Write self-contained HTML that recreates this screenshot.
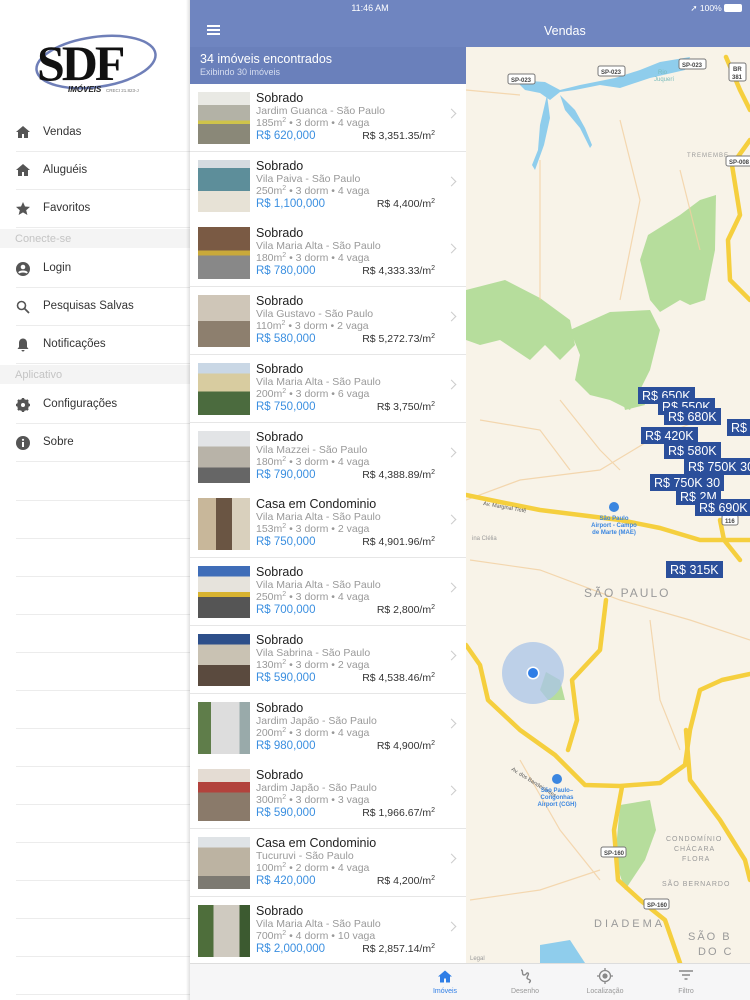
<!DOCTYPE html>
<html><head><meta charset="utf-8">
<style>
*{margin:0;padding:0;box-sizing:border-box}
body{width:750px;height:1000px;position:relative;overflow:hidden;background:#fff;font-family:"Liberation Sans",sans-serif;color:#222}
.abs{position:absolute}
.side{left:0;top:0;width:190px;height:1000px;background:#fff}
.mi{position:absolute;left:0;width:190px;height:38px;font-size:11.5px;color:#333}
.mi span{position:absolute;left:43px;top:12px}
.mi svg{position:absolute;left:16px;top:12px}
.mi:after{content:"";position:absolute;left:16px;right:0;bottom:0;border-bottom:1px solid #ececec}
.sec{position:absolute;left:0;width:190px;height:19px;background:#f4f4f4;color:#c4c4c4;font-size:11px;padding:4px 0 0 15px}
.line{position:absolute;left:16px;width:174px;border-top:1px solid #ececec}
.nav{left:190px;top:0;width:560px;height:47px;background:#6f85c0}
.lh{left:190px;top:47px;width:276px;height:37px;background:#6a80bb}
.row{position:absolute;left:190px;width:276px;height:68px;background:#fff;border-bottom:1px solid #e6e6e6}
.row .im{position:absolute;left:8px;top:8px;width:52px;height:52px}
.row .t{position:absolute;left:66px;top:7px;font-size:12.5px;color:#222}
.row .l{position:absolute;left:66px;top:21px;font-size:10.5px;color:#999}
.row .s{position:absolute;left:66px;top:33px;font-size:10.5px;color:#999}
.row .p{position:absolute;left:66px;top:46px;font-size:11.5px;color:#3b8fe0}
.row .m{position:absolute;right:31px;top:46px;font-size:10.5px;color:#333}
.row .c{position:absolute;right:11px;top:26px;width:7px;height:7px;border-right:1.3px solid #ccc;border-top:1.3px solid #ccc;transform:rotate(45deg)}
sup{font-size:7px;vertical-align:4px}
.tab{left:190px;top:963px;width:560px;height:37px;background:#f6f6f7;border-top:1px solid #ddd}
.tl{position:absolute;top:24px;font-size:7px;color:#999;width:80px;text-align:center}
.mk{position:absolute;background:#2b4f9b;color:#fff;font-size:12.5px;padding:1px 4px;height:17px;line-height:16px;white-space:nowrap}
</style></head><body>

<div class="abs side">
  <svg class="abs" style="left:30px;top:28px" width="130" height="75" viewBox="0 0 130 75">
    <ellipse cx="66" cy="34" rx="60" ry="25" fill="none" stroke="#6f7fb8" stroke-width="2.5" transform="rotate(-8 66 34)"/>
    <text x="7" y="52" font-family="Liberation Serif,serif" font-size="50" font-weight="bold" fill="#111" letter-spacing="-3">SDF</text>
    <text x="38" y="64" font-size="8" font-weight="bold" font-style="italic" fill="#222">IMÓVEIS</text>
    <text x="76" y="64" font-size="4.5" fill="#777">CRECI 21.823-J</text>
  </svg>
  <div class="mi" style="top:114px"><svg width="14" height="12" viewBox="0 0 14 12"><path d="M7 0L0 6h2v6h4V8h2v4h4V6h2z" fill="#555"/></svg><span>Vendas</span></div>
  <div class="mi" style="top:152px"><svg width="14" height="12" viewBox="0 0 14 12"><path d="M7 0L0 6h2v6h4V8h2v4h4V6h2z" fill="#555"/></svg><span>Aluguéis</span></div>
  <div class="mi" style="top:190px"><svg width="14" height="13" viewBox="0 0 14 13"><path d="M7 0l2 4.5 5 .4-3.8 3.3 1.2 4.8L7 10.4 2.6 13l1.2-4.8L0 4.9l5-.4z" fill="#555"/></svg><span>Favoritos</span></div>
  <div class="sec" style="top:229px">Conecte-se</div>
  <div class="mi" style="top:250px"><svg width="14" height="14" viewBox="0 0 14 14"><circle cx="7" cy="7" r="7" fill="#555"/><circle cx="7" cy="5" r="2.3" fill="#fff"/><path d="M3 11c1-2 7-2 8 0" stroke="#fff" stroke-width="2" fill="none"/></svg><span>Login</span></div>
  <div class="mi" style="top:288px"><svg width="14" height="14" viewBox="0 0 14 14"><circle cx="5.5" cy="5.5" r="4" fill="none" stroke="#555" stroke-width="1.6"/><path d="M8.5 8.5L13 13" stroke="#555" stroke-width="1.8"/></svg><span>Pesquisas Salvas</span></div>
  <div class="mi" style="top:326px"><svg width="14" height="14" viewBox="0 0 14 14"><path d="M7 0.5c-2.5 0-4 2-4 4.5v4L1.5 11h11L11 9V5c0-2.5-1.5-4.5-4-4.5zM5.5 12h3a1.5 1.5 0 0 1-3 0z" fill="#555"/></svg><span>Notificações</span></div>
  <div class="sec" style="top:365px">Aplicativo</div>
  <div class="mi" style="top:386px"><svg width="14" height="14" viewBox="0 0 14 14"><circle cx="7" cy="7" r="4.5" fill="none" stroke="#555" stroke-width="3"/><path d="M7 0v14M0 7h14M2 2l10 10M12 2L2 12" stroke="#555" stroke-width="2.4"/><circle cx="7" cy="7" r="2" fill="#fff"/></svg><span>Configurações</span></div>
  <div class="mi" style="top:424px"><svg width="14" height="14" viewBox="0 0 14 14"><circle cx="7" cy="7" r="7" fill="#555"/><rect x="6" y="6" width="2" height="5" fill="#fff"/><circle cx="7" cy="3.8" r="1.1" fill="#fff"/></svg><span>Sobre</span></div>
  <div class="line" style="top:500px"></div><div class="line" style="top:538px"></div><div class="line" style="top:576px"></div><div class="line" style="top:614px"></div><div class="line" style="top:652px"></div><div class="line" style="top:690px"></div><div class="line" style="top:728px"></div><div class="line" style="top:766px"></div><div class="line" style="top:804px"></div><div class="line" style="top:842px"></div><div class="line" style="top:880px"></div><div class="line" style="top:918px"></div><div class="line" style="top:956px"></div><div class="line" style="top:994px"></div>
</div>
<div class="abs" style="left:186px;top:0;width:4px;height:1000px;background:linear-gradient(90deg,rgba(0,0,0,0),rgba(0,0,0,.12))"></div>

<!-- map -->
<svg class="abs" style="left:466px;top:47px" width="284" height="916" viewBox="466 47 284 916">
  <rect x="466" y="47" width="284" height="916" fill="#f8f3e8"/>
  <g fill="#b6dd9c">
    <path d="M466 290L505 280 540 298 570 320 575 345 560 360 545 345 530 360 500 340 480 345 466 340z"/>
    <path d="M570 330L610 312 650 310 660 330 650 370 640 390 630 410 610 400 590 395 575 380 580 355z"/>
    <path d="M648 235L680 215 700 200 716 195 715 250 705 300 690 305 680 300 660 312 650 300 640 260z"/>
    <path d="M620 390L640 392 645 405 625 410z"/>
    <path d="M620 805L650 800 656 830 645 860 625 890 615 860z"/>
    <path d="M546 672L560 680 565 700 548 700 540 690z"/>
  </g>
  <g fill="#8fcdec">
    <path d="M515 80L545 82 560 90 580 85 595 82 615 78 640 70 660 62 690 57 685 70 650 78 620 88 600 85 575 90 560 92 550 100 540 93 525 90z"/>
    <path d="M547 95L540 125 538 150 532 165 535 170 544 145 550 118z"/>
    <path d="M560 95L575 110 585 128 592 145 590 148 580 128 565 110z"/>
    <path d="M540 945L570 940 585 963 540 963z"/>
  </g>
  <g fill="none" stroke="#f2d0a0" stroke-width="1.2" opacity=".8">
    <path d="M466 90L520 95M540 160L540 300M620 120L640 200 620 300M680 170L700 250M466 500L520 480 600 470 650 440 700 420"/>
    <path d="M560 400L600 450 620 470M480 420L540 430 570 470M470 560L540 570 620 600 690 620 750 640"/>
    <path d="M650 620L660 700 680 750M520 760L560 830 600 880M470 900L540 890 600 870"/>
  </g>
  <g fill="none" stroke="#f5cf3e" stroke-width="4.5" stroke-linecap="round" stroke-linejoin="round">
    <path d="M466 495L500 502 540 510 580 515 620 520 660 528 700 540 750 540"/>
    <path d="M466 645L480 665 488 700 520 730 555 755 585 785 620 786 660 783 685 765 690 730 700 690 722 680 750 674"/>
    <path d="M622 787L614 830 618 880 640 900 665 920 680 963"/>
    <path d="M686 730L690 780 720 820 745 860 750 880"/>
    <path d="M606 600L600 650 572 680 577 720 568 750"/>
    <path d="M726 57L740 90 750 110"/>
    <path d="M750 140L732 165 740 215 728 240 730 280 750 300"/>
    <path d="M720 520L724 540 740 560"/>
  </g>
  <g font-size="6" fill="#444" font-weight="bold">
    <rect x="508" y="74" width="27" height="10" rx="2" fill="#fff" stroke="#777"/><text x="511" y="82">SP-023</text>
    <rect x="598" y="66" width="27" height="10" rx="2" fill="#fff" stroke="#777"/><text x="601" y="74">SP-023</text>
    <rect x="679" y="59" width="27" height="10" rx="2" fill="#fff" stroke="#777"/><text x="682" y="67">SP-023</text>
    <rect x="729" y="63" width="17" height="18" rx="2" fill="#fff" stroke="#777"/><text x="733" y="71">BR</text><text x="732" y="79">381</text>
    <rect x="726" y="156" width="26" height="10" rx="2" fill="#fff" stroke="#777"/><text x="729" y="164">SP-008</text>
    <rect x="722" y="515" width="16" height="10" rx="2" fill="#fff" stroke="#777"/><text x="725" y="523">116</text>
    <rect x="601" y="847" width="25" height="10" rx="2" fill="#fff" stroke="#777"/><text x="604" y="855">SP-160</text>
    <rect x="644" y="899" width="25" height="10" rx="2" fill="#fff" stroke="#777"/><text x="647" y="907">SP-160</text>
  </g>
  <g font-family="Liberation Sans,sans-serif" fill="#9a9a9a">
    <text x="584" y="597" font-size="12" letter-spacing="2">SÃO PAULO</text>
    <text x="594" y="927" font-size="11" letter-spacing="3">DIADEMA</text>
    <text x="688" y="940" font-size="11" letter-spacing="2">SÃO B</text>
    <text x="698" y="955" font-size="11" letter-spacing="2">DO C</text>
    <text x="666" y="841" font-size="7" letter-spacing="1">CONDOMÍNIO</text>
    <text x="674" y="851" font-size="7" letter-spacing="1">CHÁCARA</text>
    <text x="682" y="861" font-size="7" letter-spacing="1">FLORA</text>
    <text x="662" y="886" font-size="7" letter-spacing="1">SÃO BERNARDO</text>
    <text x="687" y="157" font-size="6" letter-spacing="1">TREMEMBE</text>
    <text x="658" y="74" font-size="6" fill="#7bb">Rio</text><text x="654" y="81" font-size="6" fill="#7bb">Juquerí</text>
    <text x="472" y="540" font-size="6">ina Clélia</text>
    <text x="470" y="960" font-size="6">Legal</text>
  </g>
  <g font-size="5.5" fill="#555">
    <text transform="translate(483,505) rotate(10)">Av. Marginal Tietê</text>
    <text transform="translate(511,770) rotate(32)">Av. dos Bandeirantes</text>
  </g>
  <circle cx="614" cy="507" r="5" fill="#3b86e0"/>
  <text x="614" y="520" font-size="6" fill="#3b86e0" text-anchor="middle" font-weight="bold">São Paulo</text>
  <text x="614" y="527" font-size="6" fill="#3b86e0" text-anchor="middle" font-weight="bold">Airport - Campo</text>
  <text x="614" y="534" font-size="6" fill="#3b86e0" text-anchor="middle" font-weight="bold">de Marte (MAE)</text>
  <circle cx="557" cy="779" r="5" fill="#3b86e0"/>
  <text x="557" y="792" font-size="6" fill="#3b86e0" text-anchor="middle" font-weight="bold">São Paulo–</text>
  <text x="557" y="799" font-size="6" fill="#3b86e0" text-anchor="middle" font-weight="bold">Congonhas</text>
  <text x="557" y="806" font-size="6" fill="#3b86e0" text-anchor="middle" font-weight="bold">Airport (CGH)</text>
  <circle cx="533" cy="673" r="31" fill="#a9c4e8" opacity=".75"/>
  <circle cx="533" cy="673" r="6.5" fill="#fff"/>
  <circle cx="533" cy="673" r="5" fill="#2f7ee6"/>
</svg>
<div class="mk" style="left:638px;top:387px">R$ 650K</div>
<div class="mk" style="left:658px;top:398px">R$ 550K</div>
<div class="mk" style="left:664px;top:408px">R$ 680K</div>
<div class="mk" style="left:727px;top:419px">R$</div>
<div class="mk" style="left:641px;top:427px">R$ 420K</div>
<div class="mk" style="left:664px;top:442px">R$ 580K</div>
<div class="mk" style="left:684px;top:458px">R$ 750K 30</div>
<div class="mk" style="left:650px;top:474px">R$ 750K 30</div>
<div class="mk" style="left:676px;top:488px">R$ 2M</div>
<div class="mk" style="left:695px;top:499px">R$ 690K</div>
<div class="mk" style="left:666px;top:561px">R$ 315K</div>

<!-- nav -->
<div class="abs nav">
  <div class="abs" style="left:17px;top:25px;width:13px;height:1.6px;background:#fff;box-shadow:0 4px 0 #fff,0 8px 0 #fff"></div>
  <div class="abs" style="left:0;top:3px;width:360px;text-align:center;font-size:9px;color:#fff">11:46 AM</div>
  <div class="abs" style="right:8px;top:3px;font-size:8.5px;color:#fff">➚ 100% <span style="display:inline-block;width:18px;height:8px;border:1px solid #fff;vertical-align:-1px;background:#fff;border-radius:2px"></span></div>
  <div class="abs" style="left:354px;top:24px;font-size:12.5px;color:#fff">Vendas</div>
</div>
<div class="abs lh">
  <div class="abs" style="left:10px;top:5px;font-size:12.5px;color:#fff">34 imóveis encontrados</div>
  <div class="abs" style="left:10px;top:20px;font-size:9px;color:#d6ddf0">Exibindo 30 imóveis</div>
</div>

<div class="row" style="top:84px"><div class="im" style="background:linear-gradient(#e9e9e4 0 25%,#b3b2a6 25% 55%,#cfc34a 55% 62%,#8a8878 62%)"></div><div class="t">Sobrado</div><div class="l">Jardim Guanca - São Paulo</div><div class="s">185m<sup>2</sup> • 3 dorm • 4 vaga</div><div class="p">R$ 620,000</div><div class="m">R$ 3,351.35/m<sup>2</sup></div><div class="c"></div></div>
<div class="row" style="top:152px"><div class="im" style="background:linear-gradient(#d5dbe0 0 15%,#5d8e9a 15% 60%,#e7e2d6 60%)"></div><div class="t">Sobrado</div><div class="l">Vila Paiva - São Paulo</div><div class="s">250m<sup>2</sup> • 3 dorm • 4 vaga</div><div class="p">R$ 1,100,000</div><div class="m">R$ 4,400/m<sup>2</sup></div><div class="c"></div></div>
<div class="row" style="top:219px"><div class="im" style="background:linear-gradient(#7a5a44 0 45%,#c9a93a 45% 55%,#888 55%)"></div><div class="t">Sobrado</div><div class="l">Vila Maria Alta - São Paulo</div><div class="s">180m<sup>2</sup> • 3 dorm • 4 vaga</div><div class="p">R$ 780,000</div><div class="m">R$ 4,333.33/m<sup>2</sup></div><div class="c"></div></div>
<div class="row" style="top:287px"><div class="im" style="background:linear-gradient(#cfc6b8 0 50%,#8d7f6e 50%)"></div><div class="t">Sobrado</div><div class="l">Vila Gustavo - São Paulo</div><div class="s">110m<sup>2</sup> • 3 dorm • 2 vaga</div><div class="p">R$ 580,000</div><div class="m">R$ 5,272.73/m<sup>2</sup></div><div class="c"></div></div>
<div class="row" style="top:355px"><div class="im" style="background:linear-gradient(#c9d7e5 0 20%,#d8cca0 20% 55%,#4b6b3e 55%)"></div><div class="t">Sobrado</div><div class="l">Vila Maria Alta - São Paulo</div><div class="s">200m<sup>2</sup> • 3 dorm • 6 vaga</div><div class="p">R$ 750,000</div><div class="m">R$ 3,750/m<sup>2</sup></div><div class="c"></div></div>
<div class="row" style="top:423px"><div class="im" style="background:linear-gradient(#e2e4e6 0 30%,#b8b3a8 30% 70%,#666 70%)"></div><div class="t">Sobrado</div><div class="l">Vila Mazzei - São Paulo</div><div class="s">180m<sup>2</sup> • 3 dorm • 4 vaga</div><div class="p">R$ 790,000</div><div class="m">R$ 4,388.89/m<sup>2</sup></div><div class="c"></div></div>
<div class="row" style="top:490px"><div class="im" style="background:linear-gradient(90deg,#c8b79a 0 35%,#6a5543 35% 65%,#d9d0bd 65%)"></div><div class="t">Casa em Condominio</div><div class="l">Vila Maria Alta - São Paulo</div><div class="s">153m<sup>2</sup> • 3 dorm • 2 vaga</div><div class="p">R$ 750,000</div><div class="m">R$ 4,901.96/m<sup>2</sup></div><div class="c"></div></div>
<div class="row" style="top:558px"><div class="im" style="background:linear-gradient(#3f6db8 0 20%,#e6e3dc 20% 50%,#d8b330 50% 60%,#555 60%)"></div><div class="t">Sobrado</div><div class="l">Vila Maria Alta - São Paulo</div><div class="s">250m<sup>2</sup> • 3 dorm • 4 vaga</div><div class="p">R$ 700,000</div><div class="m">R$ 2,800/m<sup>2</sup></div><div class="c"></div></div>
<div class="row" style="top:626px"><div class="im" style="background:linear-gradient(#2d4f8a 0 20%,#c9c2b3 20% 60%,#5a4a3e 60%)"></div><div class="t">Sobrado</div><div class="l">Vila Sabrina - São Paulo</div><div class="s">130m<sup>2</sup> • 3 dorm • 2 vaga</div><div class="p">R$ 590,000</div><div class="m">R$ 4,538.46/m<sup>2</sup></div><div class="c"></div></div>
<div class="row" style="top:694px"><div class="im" style="background:linear-gradient(90deg,#5f7d4a 0 25%,#ddd 25% 80%,#9aa 80%)"></div><div class="t">Sobrado</div><div class="l">Jardim Japão - São Paulo</div><div class="s">200m<sup>2</sup> • 3 dorm • 4 vaga</div><div class="p">R$ 980,000</div><div class="m">R$ 4,900/m<sup>2</sup></div><div class="c"></div></div>
<div class="row" style="top:761px"><div class="im" style="background:linear-gradient(#e4dcd3 0 25%,#b2423c 25% 45%,#8a7a6a 45%)"></div><div class="t">Sobrado</div><div class="l">Jardim Japão - São Paulo</div><div class="s">300m<sup>2</sup> • 3 dorm • 3 vaga</div><div class="p">R$ 590,000</div><div class="m">R$ 1,966.67/m<sup>2</sup></div><div class="c"></div></div>
<div class="row" style="top:829px"><div class="im" style="background:linear-gradient(#dfe3e6 0 20%,#bcb3a2 20% 75%,#7d7a72 75%)"></div><div class="t">Casa em Condominio</div><div class="l">Tucuruvi - São Paulo</div><div class="s">100m<sup>2</sup> • 2 dorm • 4 vaga</div><div class="p">R$ 420,000</div><div class="m">R$ 4,200/m<sup>2</sup></div><div class="c"></div></div>
<div class="row" style="top:897px"><div class="im" style="background:linear-gradient(90deg,#4e6e3b 0 30%,#cfcac0 30% 80%,#3c5a30 80%)"></div><div class="t">Sobrado</div><div class="l">Vila Maria Alta - São Paulo</div><div class="s">700m<sup>2</sup> • 4 dorm • 10 vaga</div><div class="p">R$ 2,000,000</div><div class="m">R$ 2,857.14/m<sup>2</sup></div><div class="c"></div></div>

<!-- tabs -->
<div class="abs tab">
  <svg class="abs" style="left:248px;top:6px" width="14" height="13" viewBox="0 0 14 12"><path d="M7 0L0 6h2v6h4V8h2v4h4V6h2z" fill="#2f7ee6"/></svg>
  <div class="tl" style="left:215px;color:#2f7ee6">Imóveis</div>
  <svg class="abs" style="left:328px;top:5px" width="14" height="15" viewBox="0 0 14 15"><path d="M3 1c3 0 0 5 3 5s2-3 4-2-3 5 0 6 3 2 1 4" fill="none" stroke="#888" stroke-width="1.4"/></svg>
  <div class="tl" style="left:295px">Desenho</div>
  <svg class="abs" style="left:407px;top:4px" width="16" height="16" viewBox="0 0 16 16"><circle cx="8" cy="8" r="5.5" fill="none" stroke="#888" stroke-width="1.3"/><circle cx="8" cy="8" r="2.6" fill="#888"/><path d="M8 0v2.5M8 13.5V16M0 8h2.5M13.5 8H16" stroke="#888" stroke-width="1.3"/></svg>
  <div class="tl" style="left:375px">Localização</div>
  <svg class="abs" style="left:489px;top:6px" width="14" height="12" viewBox="0 0 14 12"><path d="M0 1h14M3 5h8M5.5 9h3" stroke="#888" stroke-width="1.4"/></svg>
  <div class="tl" style="left:456px">Filtro</div>
</div>
</body></html>
